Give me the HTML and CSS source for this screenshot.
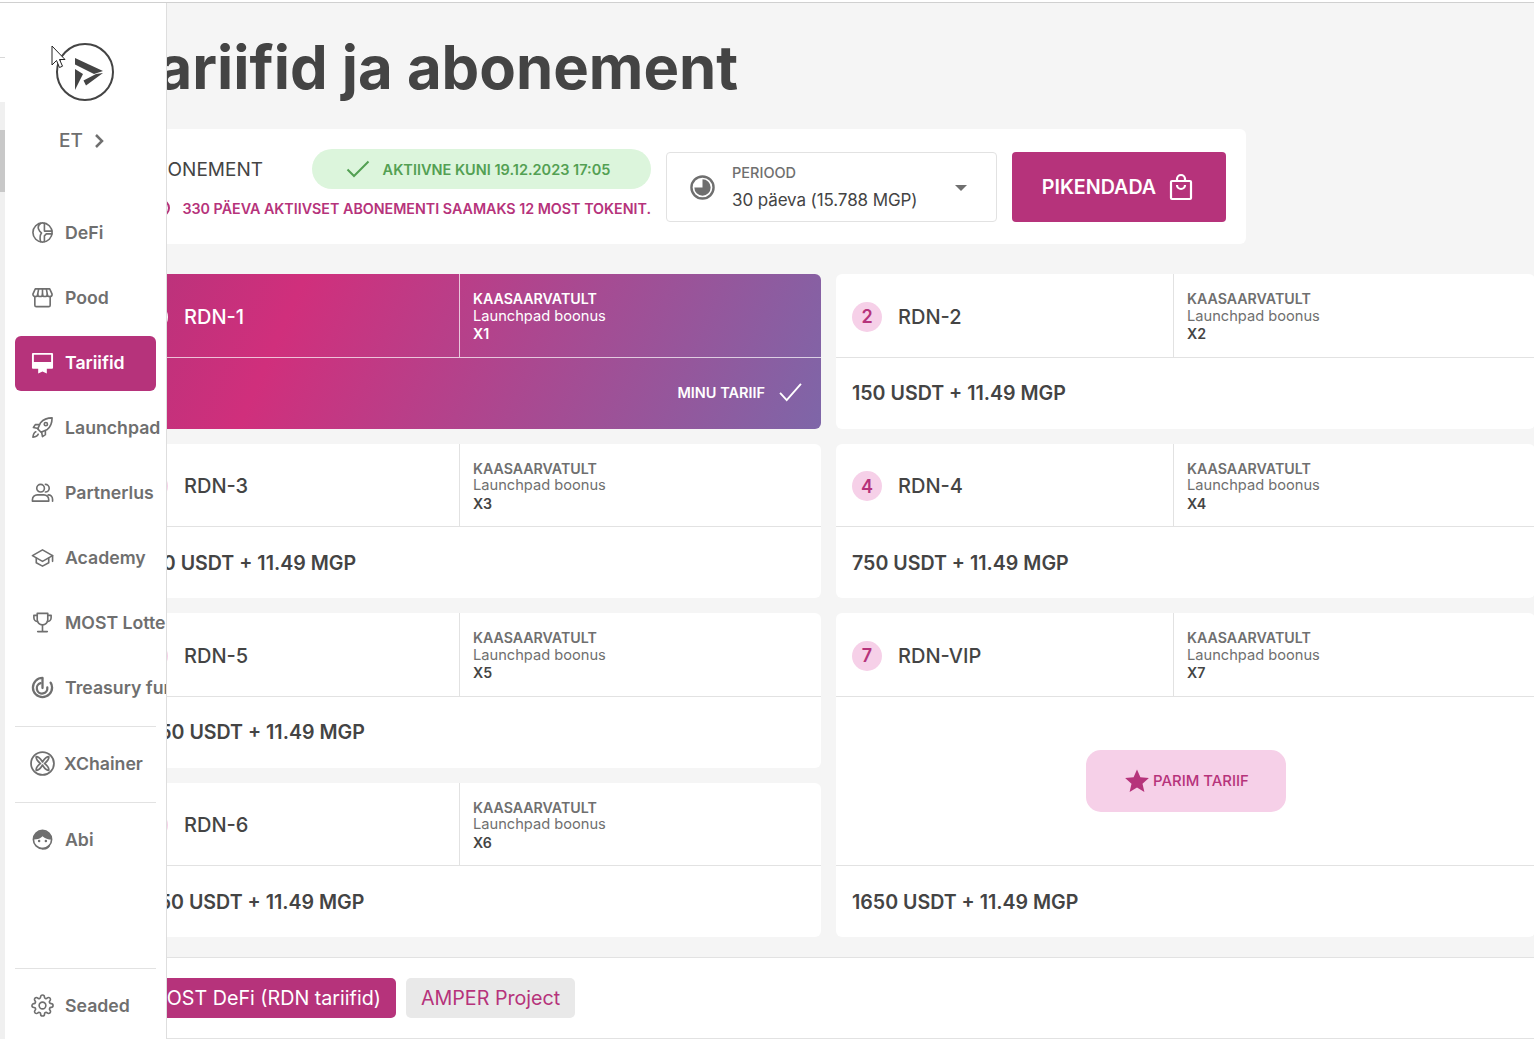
FILE: index.html
```html
<!DOCTYPE html>
<html lang="et">
<head>
    <meta charset="UTF-8">
    <meta name="viewport" content="width=device-width, initial-scale=1.0">
    <title>Tariifid ja abonement</title>
    <link rel="stylesheet" href="styles.css">
</head>
<body>
    <div class="top-line"></div>

    <div class="edge-strip">
        <div class="edge-top"></div>
        <div class="edge-thumb"></div>
    </div>

    <main class="main">
        <h1 class="page-title">Tariifid ja abonement</h1>

        <section class="panel">
            <div class="panel-info">
                <div class="panel-row">
                    <span class="panel-label">ABONEMENT</span>
                    <span class="status-pill">
                        <svg class="status-check" viewBox="0 0 24 18"><path d="M1.5 9.5 8 16 22.5 1.5"/></svg>
                        AKTIIVNE KUNI 19.12.2023 17:05
                    </span>
                </div>
                <div class="panel-hint">
                    <span class="hint-ring"></span>
                    330 PÄEVA AKTIIVSET ABONEMENTI SAAMAKS 12 MOST TOKENIT.
                </div>
            </div>
            <div class="period-select">
                <svg class="period-icon" viewBox="0 0 26 26">
                    <circle class="ring" cx="13" cy="13" r="11.5"/>
                    <path class="pie" d="M13 4.500a8.500 8.500 0 1 1-8.500 8.500H13z"/>
                </svg>
                <div class="period-text">
                    <div class="period-label">PERIOOD</div>
                    <div class="period-value">30 päeva (15.788 MGP)</div>
                </div>
                <span class="caret"></span>
            </div>
            <button class="extend-btn">
                PIKENDADA
                <svg viewBox="0 0 24 28"><path d="M3 8h18a1 1 0 0 1 1 1v16a1 1 0 0 1-1 1H3a1 1 0 0 1-1-1V9a1 1 0 0 1 1-1z"/><path d="M8 8V6a4 4 0 0 1 8 0v2"/><path d="M8 12a4 4 0 0 0 8 0"/></svg>
            </button>
        </section>

        <section class="tariff-grid">
            <article class="tariff-card is-current">
                <div class="card-head">
                    <div class="card-name"><span class="badge">1</span>RDN-1</div>
                    <div class="card-detail">
                        <div class="strong">KAASAARVATULT</div>
                        <div>Launchpad boonus</div>
                        <div class="strong">X1</div>
                    </div>
                </div>
                <div class="card-foot my-tariff">
                    MINU TARIIF
                    <svg viewBox="0 0 24 20"><path d="M1 10.5 8 18 23 1"/></svg>
                </div>
            </article>

            <article class="tariff-card">
                <div class="card-head">
                    <div class="card-name"><span class="badge">2</span>RDN-2</div>
                    <div class="card-detail">
                        <div class="strong">KAASAARVATULT</div>
                        <div>Launchpad boonus</div>
                        <div class="strong dark">X2</div>
                    </div>
                </div>
                <div class="card-foot price">150 USDT + 11.49 MGP</div>
            </article>

            <article class="tariff-card">
                <div class="card-head">
                    <div class="card-name"><span class="badge">3</span>RDN-3</div>
                    <div class="card-detail">
                        <div class="strong">KAASAARVATULT</div>
                        <div>Launchpad boonus</div>
                        <div class="strong dark">X3</div>
                    </div>
                </div>
                <div class="card-foot price">350 USDT + 11.49 MGP</div>
            </article>

            <article class="tariff-card">
                <div class="card-head">
                    <div class="card-name"><span class="badge">4</span>RDN-4</div>
                    <div class="card-detail">
                        <div class="strong">KAASAARVATULT</div>
                        <div>Launchpad boonus</div>
                        <div class="strong dark">X4</div>
                    </div>
                </div>
                <div class="card-foot price">750 USDT + 11.49 MGP</div>
            </article>

            <article class="tariff-card">
                <div class="card-head">
                    <div class="card-name"><span class="badge">5</span>RDN-5</div>
                    <div class="card-detail">
                        <div class="strong">KAASAARVATULT</div>
                        <div>Launchpad boonus</div>
                        <div class="strong dark">X5</div>
                    </div>
                </div>
                <div class="card-foot price">1050 USDT + 11.49 MGP</div>
            </article>

            <article class="tariff-card is-vip">
                <div class="card-head">
                    <div class="card-name"><span class="badge">7</span>RDN-VIP</div>
                    <div class="card-detail">
                        <div class="strong">KAASAARVATULT</div>
                        <div>Launchpad boonus</div>
                        <div class="strong dark">X7</div>
                    </div>
                </div>
                <div class="vip-body">
                    <div class="best-tariff">
                        <svg viewBox="0 0 24 24"><path d="M12 0.5l3.4 7.8 8.5.8-6.4 5.6 1.9 8.3L12 18.6 4.6 23l1.9-8.3L.1 9.1l8.5-.8z"/></svg>
                        PARIM TARIIF
                    </div>
                </div>
                <div class="card-foot price">1650 USDT + 11.49 MGP</div>
            </article>

            <article class="tariff-card">
                <div class="card-head">
                    <div class="card-name"><span class="badge">6</span>RDN-6</div>
                    <div class="card-detail">
                        <div class="strong">KAASAARVATULT</div>
                        <div>Launchpad boonus</div>
                        <div class="strong dark">X6</div>
                    </div>
                </div>
                <div class="card-foot price">1350 USDT + 11.49 MGP</div>
            </article>
        </section>

        <footer class="tabs">
            <button class="tab is-active">MOST DeFi (RDN tariifid)</button>
            <button class="tab">AMPER Project</button>
        </footer>
    </main>

    <aside class="sidebar">
        <div class="logo">
            <svg viewBox="0 0 60 60">
                <circle class="logo-ring" cx="30" cy="30" r="28"/>
                <path class="logo-mark" d="M20 16 48 29 39 32 20 22.500zM20 27l8 5-8 16zM28.500 38.500 41 32 48 31 31 43.500z"/>
            </svg>
        </div>
        <div class="lang">ET
            <svg viewBox="0 0 10 16"><path d="M2 2l6 6-6 6"/></svg>
        </div>

        <nav class="nav">
            <a class="nav-item">
                <svg viewBox="0 0 24 24"><circle cx="12" cy="12" r="10"/><path d="M14 2.500v8h8M22 13.500h-6l-2 2v6M10 2.500C7 5 7 8 9 10.500l2 2c-2 2.500-2 5-1 9"/></svg>
                DeFi
            </a>
            <a class="nav-item">
                <svg viewBox="0 0 24 24"><path d="M4 11v9a1.500 1.500 0 0 0 1.500 1.500h13A1.500 1.500 0 0 0 20 20v-9"/><path d="M4.500 3h15L22 8.500a2.500 2.500 0 0 1-5 0 2.500 2.500 0 0 1-5 0 2.500 2.500 0 0 1-5 0 2.500 2.500 0 0 1-5 0z"/><path d="M7 8.500 8 3M12 8.500V3M17 8.500 16 3"/></svg>
                Pood
            </a>
            <a class="nav-item is-active">
                <svg viewBox="0 0 24 24"><path class="fill-icon" d="M2 2h20a1 1 0 0 1 1 1v14.500a1 1 0 0 1-1 1h-5.500v5L12 21.500l-4.500 2v-5H2a1 1 0 0 1-1-1V3a1 1 0 0 1 1-1zM3 4v7.500h18V4z"/></svg>
                Tariifid
            </a>
            <a class="nav-item">
                <svg viewBox="0 0 24 24"><path d="M22 2c-5 0-9 1.500-12 5L7 13.500l3.500 3.500L17 14c3.500-3 5-7 5-12z"/><path d="M8.500 9H4.500L2.500 12l5 1M15 15.500v4L12 21.500l-1-5"/><circle cx="15.500" cy="8.500" r="1.700"/><path d="M5 16.500c-1.500.5-2.500 2-3 5.500 3.500-.5 5-1.500 5.500-3"/></svg>
                Launchpad
            </a>
            <a class="nav-item">
                <svg viewBox="0 0 24 24"><circle cx="10" cy="7.500" r="4"/><path d="M15 3.500a4 4 0 0 1 0 8M1.500 21v-1.500c0-3 2.500-5 5-5h7c2.500 0 5 2 5 5V21zM18 14.500c2.500 0 4.500 2 4.500 4.500v2"/></svg>
                Partnerlus
            </a>
            <a class="nav-item">
                <svg viewBox="0 0 24 24"><path d="M12 4 1.500 10 12 16l10.500-6z"/><path d="M5.500 12.500v5L12 21l6.500-3.500v-5M22.500 10v6"/></svg>
                Academy
            </a>
            <a class="nav-item">
                <svg viewBox="0 0 24 24"><path d="M6.500 2.500h11V9a5.500 5.500 0 0 1-11 0z"/><path d="M6.500 4.500H3V7a4 4 0 0 0 4 4M17.500 4.500H21V7a4 4 0 0 1-4 4M12 14.500v6M7 21.500h10"/></svg>
                MOST Lottery
            </a>
            <a class="nav-item">
                <svg class="thick" viewBox="0 0 24 24"><path d="M12 2A10 10 0 1 0 22 12c0-2-.6-3.800-1.500-5"/><path d="M10 7.500A5.500 5.500 0 1 0 17 12"/><path d="M12 3v9.500"/></svg>
                Treasury fund
            </a>
            <div class="nav-divider"></div>
            <a class="nav-item">
                <svg class="large" viewBox="0 0 24 24"><circle cx="12" cy="12" r="11"/><path d="M6 5.500c3 0 4 2 6 5 2-3 3-5 6-5 .5 3-1.500 4.500-4 6.500 2.500 2 4.500 3.500 4 6.500-3 0-4-2-6-5-2 3-3 5-6 5-.5-3 1.500-4.500 4-6.500-2.500-2-4.500-3.500-4-6.500z"/></svg>
                XChainer
            </a>
            <div class="nav-divider"></div>
            <a class="nav-item">
                <svg viewBox="0 0 24 24"><circle cx="12" cy="12" r="9.500"/><path class="fill-icon" d="M12 2.500a9.500 9.500 0 0 1 9.500 9.500c-3.500 0-7-1-9.500-3.500-1.500 2-5 3.500-9.500 3.500A9.500 9.500 0 0 1 12 2.500z"/><circle class="fill-icon" cx="8.500" cy="13.500" r="1.300"/><circle class="fill-icon" cx="15.500" cy="13.500" r="1.300"/><path d="M19 18.500c-1.500 2.500-4.500 3.500-7 3"/></svg>
                Abi
            </a>
        </nav>

        <div class="nav-bottom">
            <div class="nav-divider"></div>
            <a class="nav-item">
                <svg viewBox="0 0 24 24"><circle cx="12" cy="12" r="3.500"/><path d="M19.400 15a1.650 1.650 0 0 0 .33 1.820l.06.06a2 2 0 0 1 0 2.830 2 2 0 0 1-2.830 0l-.06-.06a1.650 1.650 0 0 0-1.820-.33 1.650 1.650 0 0 0-1 1.510V21a2 2 0 0 1-2 2 2 2 0 0 1-2-2v-.09A1.650 1.650 0 0 0 9 19.400a1.650 1.650 0 0 0-1.820.33l-.06.06a2 2 0 0 1-2.830 0 2 2 0 0 1 0-2.830l.06-.06a1.650 1.650 0 0 0 .33-1.820 1.650 1.650 0 0 0-1.510-1H3a2 2 0 0 1-2-2 2 2 0 0 1 2-2h.09A1.650 1.650 0 0 0 4.600 9a1.650 1.650 0 0 0-.33-1.820l-.06-.06a2 2 0 0 1 0-2.830 2 2 0 0 1 2.830 0l.06.06a1.650 1.650 0 0 0 1.820.33H9a1.650 1.650 0 0 0 1-1.510V3a2 2 0 0 1 2-2 2 2 0 0 1 2 2v.09a1.650 1.650 0 0 0 1 1.510 1.650 1.650 0 0 0 1.820-.33l.06-.06a2 2 0 0 1 2.830 0 2 2 0 0 1 0 2.830l-.06.06a1.650 1.650 0 0 0-.33 1.820V9a1.650 1.650 0 0 0 1.510 1H21a2 2 0 0 1 2 2 2 2 0 0 1-2 2h-.09a1.650 1.650 0 0 0-1.510 1z"/></svg>
                Seaded
            </a>
        </div>
    </aside>

    <svg class="cursor" viewBox="0 0 15 24"><path d="M1 1v19l4.500-4.500 3 7 3-1.300-3-6.700H14z"/></svg>
</body>
</html>
```

FILE: styles.css
```css
* {
    margin: 0;
    padding: 0;
    box-sizing: border-box;
}

html, body {
    height: 1039px;
    overflow: hidden;
}

body {
    font-family: Inter, 'Noto Sans', sans-serif;
    background: #f5f5f5;
    color: #444;
    position: relative;
}

.top-line {
    height: 3px;
    background: #d0d0d0;
    border-top: 2px solid white;
}

.main {
    margin-left: 122px;
    width: 1412px;
    height: 1036px;
    display: flex;
    flex-direction: column;
}

.page-title {
    height: 126px;
    flex: none;
    padding-top: 29px;
    font-size: 59.800px;
    line-height: 70px;
    font-weight: 700;
    color: #444;
    white-space: nowrap;
}

/* top panel */
.panel {
    width: 1124px;
    height: 115px;
    flex: none;
    background: white;
    border-radius: 6px;
    padding: 20px;
    display: flex;
    align-items: flex-start;
    gap: 15px;
}

.panel-info {
    width: 509px;
}

.panel-row {
    display: flex;
    justify-content: space-between;
    align-items: center;
}

.panel-label {
    font-size: 19px;
}

.status-pill {
    width: 339px;
    height: 40px;
    padding-right: 7px;
    border-radius: 20px;
    background: #dcf5dc;
    color: #53a053;
    font-size: 14.500px;
    font-weight: 600;
    display: flex;
    align-items: center;
    justify-content: center;
    gap: 13px;
    white-space: nowrap;
}

.status-check {
    width: 24px;
    height: 18px;
    fill: none;
    stroke: #53a053;
    stroke-width: 2;
}

.panel-hint {
    margin-top: 10px;
    display: flex;
    justify-content: flex-end;
    align-items: center;
    gap: 12px;
    color: #b6337b;
    font-size: 14.270px;
    font-weight: 600;
    white-space: nowrap;
}

.hint-ring {
    width: 18px;
    height: 18px;
    border: 2px solid #b6337b;
    border-radius: 50%;
}

.period-select {
    width: 331px;
    height: 70px;
    margin-top: 3px;
    border: 1px solid #e2e2e2;
    border-radius: 4px;
    display: flex;
    align-items: center;
    padding-left: 23px;
    position: relative;
}

.period-icon {
    width: 25px;
    height: 25px;
    flex: none;
}

.period-icon .ring {
    fill: none;
    stroke: #6f6f6f;
    stroke-width: 2.500;
}

.period-icon .pie {
    fill: #6f6f6f;
}

.period-text {
    margin-left: 17px;
    padding-top: 2px;
}

.period-label {
    font-size: 14.500px;
    font-weight: 500;
    color: #6f6f6f;
    line-height: 20px;
}

.period-value {
    font-size: 17px;
    letter-spacing: -0.1px;
    line-height: 26px;
    margin-top: 4px;
    white-space: nowrap;
}

.caret {
    position: absolute;
    right: 29px;
    top: 32px;
    border-left: 6px solid transparent;
    border-right: 6px solid transparent;
    border-top: 6px solid #6f6f6f;
}

.extend-btn {
    width: 214px;
    height: 70px;
    margin-top: 3px;
    padding-right: 3px;
    background: #b6337b;
    color: white;
    border: none;
    border-radius: 4px;
    font-family: inherit;
    font-size: 19.700px;
    font-weight: 600;
    display: flex;
    align-items: center;
    justify-content: center;
    gap: 13px;
}

.extend-btn svg {
    width: 24px;
    height: 28px;
    fill: none;
    stroke: white;
    stroke-width: 2.200;
}

/* tariff cards */
.tariff-grid {
    margin-top: 30px;
    display: grid;
    grid-template-columns: 699px 699px;
    grid-auto-rows: 154.500px;
    gap: 15px;
    flex: none;
}

.tariff-card {
    background: white;
    border-radius: 6px;
    display: flex;
    flex-direction: column;
    overflow: hidden;
}

.is-vip {
    grid-row: span 2;
}

.card-head {
    height: 83.500px;
    flex: none;
    display: flex;
    border-bottom: 1px solid #e2e2e2;
}

.card-name {
    width: 338px;
    border-right: 1px solid #e2e2e2;
    padding-left: 16px;
    padding-top: 3px;
    display: flex;
    align-items: center;
    gap: 16px;
    font-size: 20px;
    font-weight: 500;
    color: #444;
}

.badge {
    width: 30px;
    height: 30px;
    border-radius: 50%;
    background: #f6d0e8;
    color: #b6337b;
    font-size: 18px;
    font-weight: 600;
    display: flex;
    align-items: center;
    justify-content: center;
}

.card-detail {
    padding-left: 13px;
    padding-top: 2px;
    display: flex;
    flex-direction: column;
    justify-content: center;
    font-size: 14.650px;
    line-height: 17.500px;
    color: #6f6f6f;
}

.card-detail .strong {
    font-size: 14.200px;
    font-weight: 600;
}

.card-detail .dark {
    color: #444;
}

.card-foot {
    flex: 1;
    display: flex;
    align-items: center;
    padding-left: 16px;
}

.price {
    font-size: 19.600px;
    font-weight: 600;
    color: #444;
    white-space: nowrap;
}

.is-vip .card-foot {
    flex: none;
    height: 72px;
    border-top: 1px solid #e2e2e2;
}

.vip-body {
    flex: 1;
    display: flex;
    align-items: center;
    justify-content: center;
}

.best-tariff {
    width: 200px;
    height: 62px;
    padding-left: 3px;
    border-radius: 15px;
    background: #f6d0e8;
    color: #b6337b;
    font-size: 14.900px;
    font-weight: 500;
    display: flex;
    align-items: center;
    justify-content: center;
    gap: 4px;
}

.best-tariff svg {
    width: 24px;
    height: 24px;
    fill: #b6337b;
}

.is-current {
    color: white;
    background: linear-gradient(114deg, #b6337b 0%, #d02f7c 24%, #7e66a8 100%);
}

.is-current .card-head {
    border-bottom-color: rgba(255, 255, 255, 0.7);
}

.is-current .card-name {
    color: white;
    border-right-color: rgba(255, 255, 255, 0.7);
}

.is-current .card-detail {
    color: white;
}

.is-current .badge {
    background: white;
}

.my-tariff {
    justify-content: flex-end;
    padding-right: 19px;
    padding-bottom: 2px;
    font-size: 14.500px;
    font-weight: 600;
    gap: 14px;
}

.my-tariff svg {
    width: 23px;
    height: 19px;
    fill: none;
    stroke: white;
    stroke-width: 2;
}

/* footer tabs */
.tabs {
    margin-top: 20px;
    flex: 1;
    background: white;
    border-top: 1px solid #e2e2e2;
    border-bottom: 1px solid #e2e2e2;
    padding: 20px 0 0 12px;
    display: flex;
    align-items: flex-start;
    gap: 10px;
}

.tab {
    height: 40px;
    padding: 0 15px;
    border: none;
    border-radius: 5px;
    background: #e9e9e9;
    color: #b6337b;
    font-family: inherit;
    font-size: 19.700px;
    white-space: nowrap;
}

.tab.is-active {
    background: #b6337b;
    color: white;
}

/* sidebar */
.edge-strip {
    position: absolute;
    left: 0;
    top: 3px;
    width: 5px;
    height: 1036px;
    background: #f0f0f0;
}

.edge-top {
    height: 99px;
    background: white;
    padding-top: 54px;
}

.edge-top::before {
    content: '';
    display: block;
    height: 1px;
    background: #d8d8d8;
}

.edge-thumb {
    height: 62px;
    margin-top: 28px;
    background: #c8c8c8;
}

.sidebar {
    position: absolute;
    left: 5px;
    top: 3px;
    width: 162px;
    height: 1036px;
    background: white;
    border-right: 1px solid #dedede;
    padding: 0 10px;
    overflow: hidden;
    display: flex;
    flex-direction: column;
}

.logo {
    margin-top: 39px;
    margin-left: 40px;
    height: 60px;
}

.logo svg {
    width: 60px;
    height: 60px;
}

.logo-ring {
    fill: none;
    stroke: #444;
    stroke-width: 2;
}

.logo-mark {
    fill: #444;
}

.lang {
    margin-top: 27px;
    margin-left: 44px;
    font-size: 19px;
    font-weight: 500;
    color: #6f6f6f;
    line-height: 24px;
    display: flex;
    align-items: center;
    gap: 11px;
}

.lang svg {
    width: 10px;
    height: 16px;
    fill: none;
    stroke: #6f6f6f;
    stroke-width: 2.500;
}

.nav {
    margin-top: 53px;
}

.nav-item {
    width: 141px;
    height: 55px;
    margin-bottom: 10px;
    padding-left: 16px;
    padding-bottom: 2px;
    border-radius: 6px;
    display: flex;
    align-items: center;
    gap: 11px;
    font-size: 17.700px;
    font-weight: 600;
    color: #6f6f6f;
    white-space: nowrap;
}

.nav-item svg {
    width: 23px;
    height: 23px;
    flex: none;
    fill: none;
    stroke: #6f6f6f;
    stroke-width: 1.700;
    stroke-linejoin: round;
    stroke-linecap: round;
}

.nav-item svg.thick {
    stroke-width: 2.400;
}

.nav-item svg.large {
    width: 25px;
    height: 25px;
    margin-right: -2px;
    margin-left: -1px;
}

.nav-item .fill-icon {
    fill: #6f6f6f;
    stroke: none;
}

.nav-item.is-active {
    background: #b6337b;
    color: white;
}

.nav-item.is-active .fill-icon {
    fill: white;
}

.nav-divider {
    width: 141px;
    height: 1px;
    background: #e2e2e2;
    margin: 0 0 10px;
}

.nav-bottom {
    position: absolute;
    left: 10px;
    top: 965px;
}

.cursor {
    position: absolute;
    left: 51px;
    top: 45px;
    width: 15px;
    height: 24px;
    fill: white;
    stroke: #222;
    stroke-width: 1;
}
```
